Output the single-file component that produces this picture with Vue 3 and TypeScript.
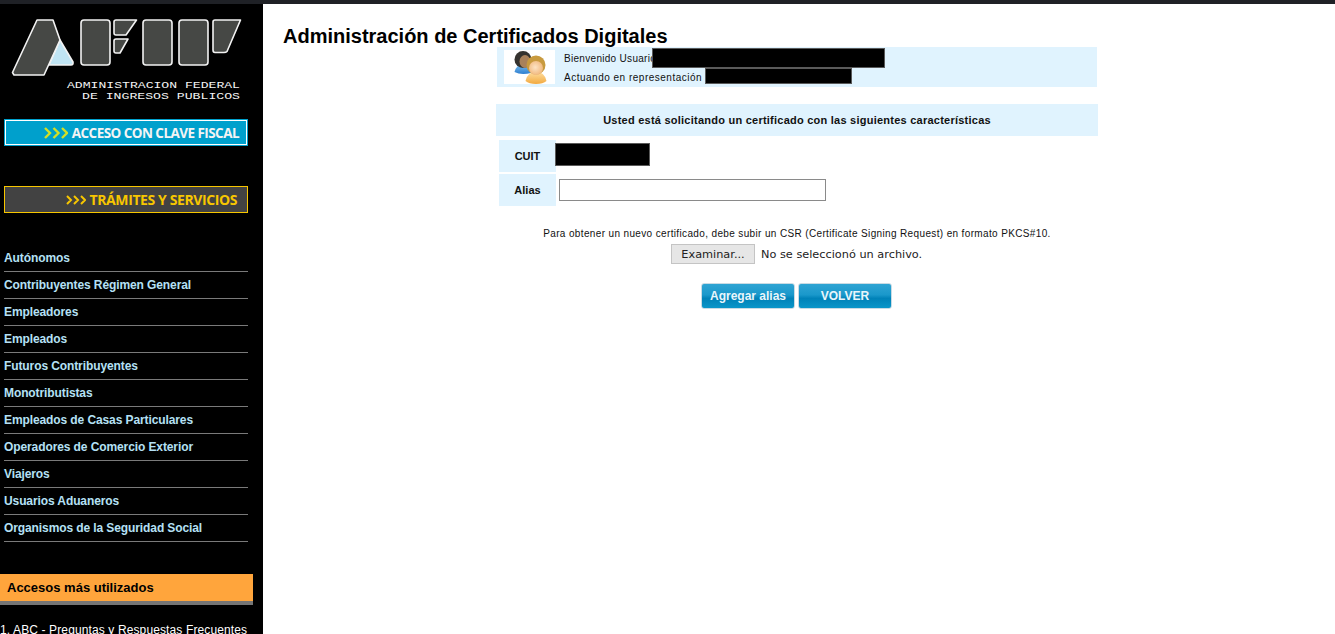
<script setup lang="ts">
const menu: string[] = [
  'Autónomos',
  'Contribuyentes Régimen General',
  'Empleadores',
  'Empleados',
  'Futuros Contribuyentes',
  'Monotributistas',
  'Empleados de Casas Particulares',
  'Operadores de Comercio Exterior',
  'Viajeros',
  'Usuarios Aduaneros',
  'Organismos de la Seguridad Social',
]
</script>

<template>
  <div class="page">
    <div class="topbar"></div>
    <div class="columns">
      <aside class="sidebar">
        <svg class="logo" width="263" height="115" viewBox="0 4 263 115">
          <g fill="#464845" stroke="#f2f2f2" stroke-width="1.6" stroke-linejoin="round">
            <path d="M60 40L73 62Q73.500 65 71 65H49Z" fill="#c0e4f3" />
            <path d="M37 20H53L60 40L44 75H14L12.500 72.500Z" />
            <rect x="81" y="20" width="29" height="45" rx="3" />
            <path d="M116 20H136.500L126 35H116Q114 35 114 33V22Q114 20 116 20Z" />
            <path d="M116 39H128L120 53H116Q114 53 114 51V41Q114 39 116 39Z" />
            <rect x="143" y="20" width="29" height="45" rx="3" />
            <rect x="179" y="20" width="29" height="45" rx="3" />
            <path d="M215 20H240.500L227 51.500Q226 52.500 224 52.500H215Q213 52.500 213 50V22Q213 20 215 20Z" />
          </g>
          <text class="logo-text" x="67" y="88" textLength="173" lengthAdjust="spacingAndGlyphs">ADMINISTRACION FEDERAL</text>
          <text class="logo-text" x="82" y="98.500" textLength="158" lengthAdjust="spacingAndGlyphs">DE INGRESOS PUBLICOS</text>
        </svg>

        <a class="banner banner-blue">
          <svg class="chevrons" width="24" height="12" viewBox="0 0 24 12">
            <path d="M1 1L6 6L1 11M9.500 1L14.500 6L9.500 11M18 1L23 6L18 11" fill="none" stroke="#d3df26" stroke-width="2.400" />
          </svg>
          ACCESO CON CLAVE FISCAL
        </a>
        <a class="banner banner-dark">
          <svg class="chevrons" width="20" height="10" viewBox="0 0 20 10">
            <path d="M1 1L5 5L1 9M8 1L12 5L8 9M15 1L19 5L15 9" fill="none" stroke="#f7c600" stroke-width="2" />
          </svg>
          TRÁMITES Y SERVICIOS
        </a>

        <ul class="menu">
          <li v-for="item in menu" :key="item">{{ item }}</li>
        </ul>

        <div class="accesos">Accesos más utilizados</div>
        <div class="accesos-item">1. ABC - Preguntas y Respuestas Frecuentes</div>
      </aside>

      <main class="main">
        <h1>Administración de Certificados Digitales</h1>

        <div class="panel">
          <div class="user">
            <div class="user-icon">
              <svg width="34" height="34" viewBox="0 0 34 34">
                <defs>
                  <radialGradient id="face" cx="0.45" cy="0.45" r="0.6">
                    <stop offset="0" stop-color="#fde3c4" />
                    <stop offset="1" stop-color="#f0b67a" />
                  </radialGradient>
                  <linearGradient id="shirt" x1="0" y1="0" x2="0" y2="1">
                    <stop offset="0" stop-color="#ffe2a8" />
                    <stop offset="1" stop-color="#f2a93f" />
                  </linearGradient>
                  <linearGradient id="blue" x1="0" y1="0" x2="0" y2="1">
                    <stop offset="0" stop-color="#7cc0f0" />
                    <stop offset="1" stop-color="#2f7fd0" />
                  </linearGradient>
                </defs>
                <path d="M10 14Q3 15 1.500 22Q8 25.500 18 23L18 16Z" fill="url(#blue)" />
                <circle cx="10" cy="9.500" r="8.500" fill="#35332f" />
                <ellipse cx="12" cy="11.500" rx="5.500" ry="6.500" fill="#a9815a" />
                <path d="M23 21Q14 22.500 12.500 31Q16 34 23 34Q30 34 33.500 31Q32 22.500 23 21Z" fill="url(#shirt)" />
                <circle cx="23" cy="15" r="9.500" fill="#c89a3e" />
                <ellipse cx="23" cy="18" rx="7" ry="7" fill="url(#face)" />
              </svg>
            </div>
            <div class="user-lines">
              <div class="welcome">Bienvenido Usuario</div>
              <div>Actuando en representación</div>
            </div>
            <div class="redact redact-user"></div>
            <div class="redact redact-rep"></div>
          </div>

          <div class="heading">Usted está solicitando un certificado con las siguientes características</div>

          <div class="row">
            <div class="label">CUIT</div>
            <div class="redact redact-cuit"></div>
          </div>
          <div class="row">
            <div class="label">Alias</div>
            <input class="alias" type="text" />
          </div>

          <p class="note">Para obtener un nuevo certificado, debe subir un CSR (Certificate Signing Request) en formato PKCS#10.</p>

          <div class="file">
            <button class="file-btn">Examinar...</button>
            <span class="file-name">No se seleccionó un archivo.</span>
          </div>

          <div class="actions">
            <button class="action">Agregar alias</button>
            <button class="action">VOLVER</button>
          </div>
        </div>
      </main>
    </div>
  </div>
</template>

<style>
html, body {
  margin: 0;
  background: #fff;
  overflow: hidden;
}
</style>

<style scoped>
.page {
  height: 634px;
  overflow: hidden;
  font-family: "Liberation Sans", Arial, sans-serif;
}
.topbar {
  height: 4px;
  background: #1f2126;
}
.columns {
  display: flex;
  height: 630px;
}
.sidebar {
  width: 263px;
  flex: none;
  background: #000;
  overflow: hidden;
}
.logo {
  display: block;
}
.logo-text {
  font-family: "Liberation Mono", monospace;
  font-size: 9px;
  fill: #f4f4f4;
}
.banner {
  display: flex;
  align-items: center;
  justify-content: flex-end;
  gap: 4px;
  box-sizing: border-box;
  width: 244px;
  height: 27px;
  margin-left: 4px;
  font-family: "Open Sans", sans-serif;
  font-weight: 700;
  white-space: nowrap;
}
.banner-blue {
  background: #00a0cc;
  border: 1px solid #00a0cc;
  box-shadow: inset 0 0 0 1px #fff;
  color: #f4f4f4;
  padding-right: 8px;
  font-size: 13.500px;
  letter-spacing: -0.550px;
}
.banner-dark {
  margin-top: 40px;
  background: #424242;
  border: 1px solid #f7c600;
  color: #f7c600;
  padding-right: 10px;
  font-size: 14px;
  letter-spacing: -0.400px;
}
.chevrons {
  flex: none;
}
.menu {
  list-style: none;
  width: 244px;
  margin: 32px 0 0 4px;
  padding: 0;
}
.menu li {
  box-sizing: border-box;
  height: 27px;
  line-height: 26px;
  border-bottom: 1px solid #7a7a7a;
  color: #b5e0f5;
  font-size: 12px;
  font-weight: bold;
  white-space: nowrap;
  letter-spacing: -0.100px;
}
.accesos {
  box-sizing: border-box;
  width: 253px;
  height: 31px;
  margin-top: 32px;
  padding-left: 7px;
  line-height: 27px;
  background: #ffa53c;
  border-bottom: 4px solid #757575;
  color: #000;
  font-size: 13px;
  font-weight: bold;
}
.accesos-item {
  margin-top: 18px;
  color: #fff;
  font-size: 12px;
  white-space: nowrap;
  letter-spacing: 0.120px;
}
.main {
  flex: 1;
  min-width: 0;
  background: #fff;
}
h1 {
  margin: 21px 0 0 20px;
  height: 22px;
  line-height: 22px;
  font-size: 20px;
  font-weight: bold;
  color: #000;
}
.panel {
  width: 602px;
  margin-left: 233px;
}
.user {
  position: relative;
  display: flex;
  align-items: center;
  gap: 9px;
  box-sizing: border-box;
  width: 600px;
  height: 40px;
  margin: 0 0 17px 1px;
  padding-left: 7px;
  background: #e0f3fe;
}
.user-icon {
  display: flex;
  align-items: center;
  justify-content: center;
  width: 51px;
  height: 34px;
  background: #fff;
}
.user-lines {
  padding-top: 2px;
  font-size: 10px;
  line-height: 19px;
  color: #111;
  letter-spacing: 0.500px;
}
.welcome {
  letter-spacing: 0.300px;
}
.redact {
  background: #000;
  border: 1px solid #5a5a5a;
  box-sizing: border-box;
}
.redact-user {
  position: absolute;
  left: 155px;
  top: 1px;
  width: 233px;
  height: 20px;
}
.redact-rep {
  position: absolute;
  left: 208px;
  top: 21px;
  width: 147px;
  height: 16px;
}
.heading {
  height: 32px;
  line-height: 32px;
  margin-bottom: 4px;
  background: #e0f3fe;
  text-align: center;
  font-size: 11px;
  font-weight: bold;
  color: #111;
  letter-spacing: 0.240px;
}
.row {
  display: flex;
  align-items: center;
  height: 32px;
  margin: 0 0 2px 3px;
}
.label {
  width: 57px;
  height: 32px;
  line-height: 32px;
  background: #e0f3fe;
  text-align: center;
  font-size: 11px;
  font-weight: bold;
  color: #111;
}
.redact-cuit {
  width: 95px;
  height: 23px;
  margin: -3px 0 0 -1px;
}
.alias {
  box-sizing: border-box;
  width: 267px;
  height: 22px;
  margin-left: 3px;
  padding: 0;
  border: 1px solid #8a8a8a;
  background: #fff;
  outline: none;
}
.note {
  margin: 22px 0 0;
  height: 12px;
  line-height: 12px;
  text-align: center;
  font-size: 10px;
  color: #111;
  letter-spacing: 0.360px;
}
.file {
  display: flex;
  align-items: center;
  height: 20px;
  margin: 4px 0 0 175px;
  font-family: "DejaVu Sans", sans-serif;
  font-size: 11.300px;
  color: #222;
}
.file-btn {
  box-sizing: border-box;
  width: 84px;
  height: 20px;
  margin-right: 6px;
  padding: 1px 0 0;
  border: 1px solid #c4c4c4;
  background: #e6e6e6;
  font: inherit;
  color: #222;
}
.file-name {
  padding-top: 1px;
}
.actions {
  display: flex;
  gap: 3px;
  margin: 19px 0 0 205px;
}
.action {
  box-sizing: border-box;
  width: 94px;
  height: 26px;
  padding: 0;
  border: 1px solid #c9dbe4;
  border-radius: 3px;
  background: linear-gradient(#2fa4d3 0%, #1a98cb 45%, #0082b8 60%, #0a96c9 100%);
  color: #e9f6fb;
  font-family: "Liberation Sans", Arial, sans-serif;
  font-size: 12px;
  font-weight: bold;
}
</style>
